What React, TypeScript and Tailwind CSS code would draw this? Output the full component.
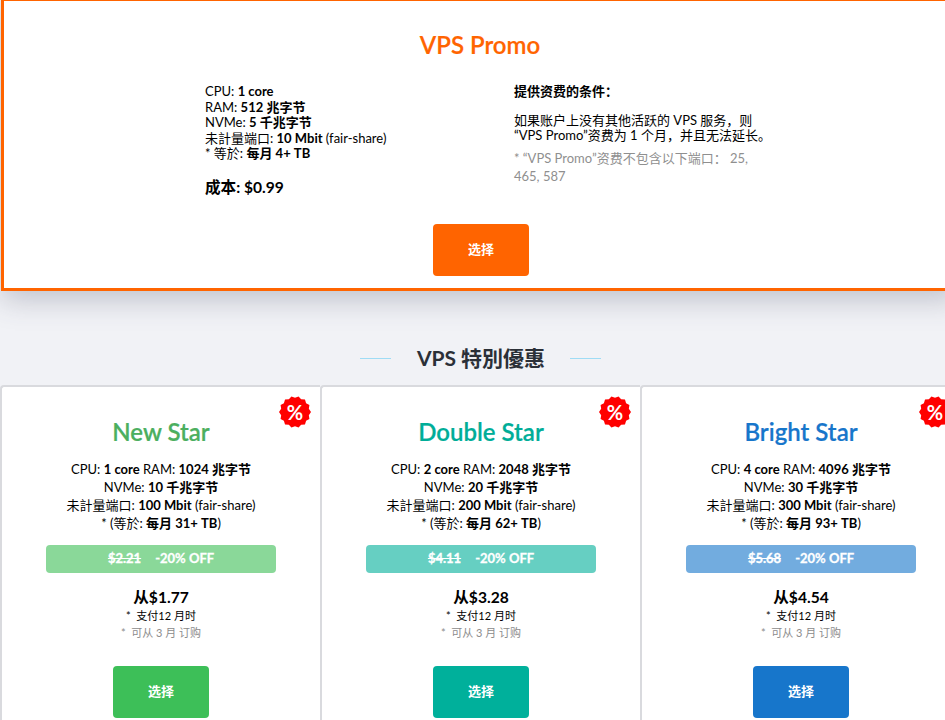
const FONT = "font-['Lato','Noto_Sans_CJK_SC',sans-serif]";

const PLANS = [
  { id: 1, name: "New Star", cpu: "1", ram: "1024", nvme: "10", port: "100", tb: "31", old: "$2.21", price: "$1.77", title: "text-[#4caf5f]", badge: "bg-[#8ad899]", button: "bg-[#3dbf58]" },
  { id: 2, name: "Double Star", cpu: "2", ram: "2048", nvme: "20", port: "200", tb: "62", old: "$4.11", price: "$3.28", title: "text-[#00ad98]", badge: "bg-[#66cfc2]", button: "bg-[#00b09b]" },
  { id: 3, name: "Bright Star", cpu: "4", ram: "4096", nvme: "30", port: "300", tb: "93", old: "$5.68", price: "$4.54", title: "text-[#1776cb]", badge: "bg-[#72acdf]", button: "bg-[#1776cb]" },
];

function scallopPoints() {
  const pts: string[] = [];
  const n = 28;
  for (let i = 0; i < n; i++) {
    const r = i % 2 === 0 ? 16 : 14.2;
    const a = (i / n) * Math.PI * 2;
    pts.push(`${(16 + r * Math.cos(a)).toFixed(2)},${(16 + r * Math.sin(a)).toFixed(2)}`);
  }
  return pts.join(" ");
}

function PercentBadge() {
  return (
    <div className="absolute right-[9px] top-[9px] w-8 h-8 flex items-center justify-center">
      <svg viewBox="0 0 32 32" className="absolute inset-0 w-8 h-8">
        <polygon points={scallopPoints()} fill="#ff0000" />
      </svg>
      <span className="relative text-white font-bold text-[20px] leading-none">%</span>
    </div>
  );
}

function PlanCard({ plan }: { plan: (typeof PLANS)[number] }) {
  return (
    <div className="relative w-[320px] shrink-0 bg-white border-l-2 border-t-2 border-[#d9dade] rounded-tl-[4px] pt-[29px] pb-6 flex flex-col items-center text-black">
      <PercentBadge />
      <h3 className={`text-[24px] leading-[32px] font-semibold [-webkit-text-stroke:0.2px] ${plan.title}`}>{plan.name}</h3>
      <div className="mt-[12px] text-[13px] leading-[18px] text-center">
        <div>CPU: <b>{plan.cpu} core</b> RAM: <b>{plan.ram} 兆字节</b></div>
        <div>NVMe: <b>{plan.nvme} 千兆字节</b></div>
        <div>未計量端口: <b>{plan.port} Mbit</b> (fair-share)</div>
        <div>* (等於: <b>每月 {plan.tb}+ TB</b>)</div>
      </div>
      <div className={`mt-[13px] w-[230px] h-[28px] rounded-[4px] flex items-center justify-center gap-[14px] text-white font-bold text-[13px] [-webkit-text-stroke:0.3px] ${plan.badge}`}>
        <span className="line-through">{plan.old}</span>
        <span>-20% OFF</span>
      </div>
      <div className="mt-[14px] text-[15.6px] leading-[20px] font-bold">从{plan.price}</div>
      <div className="mt-[1px] text-[11px] leading-[16px]">*&nbsp; 支付12 月时</div>
      <div className="mt-[0px] text-[11px] leading-[18px] text-[#8c8c8c]">*&nbsp; 可从 3 月 订购</div>
      <button className={`mt-[24px] w-[96px] h-[52px] rounded-[4px] text-white font-bold text-[13px] ${plan.button}`}>选择</button>
    </div>
  );
}

export default function App() {
  return (
    <div className={`${FONT} w-[945px] h-[720px] overflow-hidden bg-[#f1f2f6]`}>
      <section className="relative w-[958px] ml-px -mt-[2px] h-[293px] bg-white border-[3px] border-[#ff6400] shadow-[0_8px_28px_rgba(60,65,90,0.28)] text-black">
        <h2 className="pt-[28px] text-center text-[24px] leading-[32px] font-semibold [-webkit-text-stroke:0.2px] text-[#ff6400]">VPS Promo</h2>
        <div className="mt-[23px] pl-[201px] flex">
          <div className="w-[309px] text-[13px] leading-[15.5px]">
            <div>CPU: <b>1 core</b></div>
            <div>RAM: <b>512 兆字节</b></div>
            <div>NVMe: <b>5 千兆字节</b></div>
            <div>未計量端口: <b>10 Mbit</b> (fair-share)</div>
            <div>* 等於: <b>每月 4+ TB</b></div>
            <div className="mt-[15px] text-[15.6px] leading-[20px] font-bold">成本: $0.99</div>
          </div>
          <div className="w-[250px] text-[13px]">
            <div className="font-bold leading-[15.5px]">提供资费的条件：</div>
            <div className="mt-[13px] leading-[15.5px] whitespace-nowrap">如果账户上没有其他活跃的 VPS 服务，则<br />“VPS Promo”资费为 1 个月，并且无法延长。</div>
            <div className="mt-[5px] leading-[18px] text-[#8f8f8f]">* “VPS Promo”资费不包含以下端口： 25, 465, 587</div>
          </div>
        </div>
        <div className="absolute left-[429px] top-[223px]">
          <button className="w-[96px] h-[52px] rounded-[4px] bg-[#ff6400] text-white font-bold text-[13px]">选择</button>
        </div>
      </section>
      <div className="mt-[54px] flex items-center justify-center gap-[25px] pl-[16px] h-[26px]">
        <span className="w-[31px] h-px bg-[#9fdcf5]" />
        <h2 className="pl-px text-[21px] leading-[26px] font-bold text-[#2b3038]">VPS 特別優惠</h2>
        <span className="w-[31px] h-px bg-[#9fdcf5]" />
      </div>
      <div className="mt-[14px] flex">
        {PLANS.map((plan) => (
          <PlanCard key={plan.id} plan={plan} />
        ))}
      </div>
    </div>
  );
}
